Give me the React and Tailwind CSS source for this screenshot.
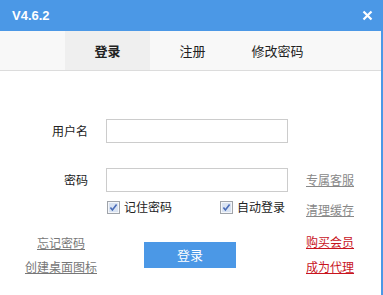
import React from "react";

const font = { fontFamily: '"Microsoft YaHei", "Noto Sans CJK SC", "Noto Sans", sans-serif' };

const Check = () => (
  <svg width="13" height="13" viewBox="0 0 13 13" className="shrink-0">
    <rect x="0.5" y="0.5" width="12" height="12" fill="#f4f6fa" stroke="#a0a4aa" />
    <rect x="2" y="2" width="9" height="9" fill="#d9e3f2" />
    <path d="M3.4 6.4 L5.4 9 L9.6 3.4" fill="none" stroke="#4a6cb8" strokeWidth="1.6" />
  </svg>
);

const Tab = ({ children, active = false }) => (
  <div
    className={`w-[85px] h-full flex items-center justify-center text-[13px] text-[#222] ${
      active ? "bg-[#efefef] font-bold" : ""
    }`}
  >
    {children}
  </div>
);

export default function App() {
  return (
    <div className="w-[383px] h-[295px] bg-white overflow-hidden flex flex-col" style={font}>
      {/* title bar */}
      <div className="h-[31px] bg-[#4b98e6] flex items-center justify-between pl-[12px] pr-[10px] shrink-0">
        <span className="text-white font-bold text-[13px]" style={{ fontFamily: '"Liberation Sans", Arial, sans-serif' }}>
          V4.6.2
        </span>
        <svg width="11" height="11" viewBox="0 0 11 11">
          <path d="M1.5 1.5 L9.5 9.5 M9.5 1.5 L1.5 9.5" stroke="#fff" strokeWidth="2.2" />
        </svg>
      </div>

      <div className="flex-1 flex flex-col border-r-2 border-[#4b98e6]">
        {/* tabs */}
        <div className="h-[40px] bg-[#f8f8f8] border-b border-[#dcdcdc] flex pl-[65px] shrink-0">
          <Tab active>登录</Tab>
          <Tab>注册</Tab>
          <Tab>修改密码</Tab>
        </div>

        {/* username */}
        <div className="flex items-center h-[24px] mt-[48px]">
          <span className="w-[88px] text-right text-[12px] text-[#222]">用户名</span>
          <div className="ml-[18px] w-[182px] h-[24px] border border-[#cccccc] bg-white" />
        </div>

        {/* password */}
        <div className="flex items-center h-[24px] mt-[25px]">
          <span className="w-[88px] text-right text-[12px] text-[#222]">密码</span>
          <div className="ml-[18px] w-[182px] h-[24px] border border-[#cccccc] bg-white" />
          <a className="ml-[18px] text-[12px] text-[#888] underline">专属客服</a>
        </div>

        {/* checkboxes */}
        <div className="flex items-center h-[16px] mt-[7px]">
          <div className="ml-[107px] flex items-center gap-[4px] w-[113px]">
            <Check />
            <span className="text-[12px] text-[#222]">记住密码</span>
          </div>
          <div className="flex items-center gap-[4px] w-[86px]">
            <Check />
            <span className="text-[12px] text-[#222]">自动登录</span>
          </div>
          <a className="mt-[6px] text-[12px] text-[#888] underline">清理缓存</a>
        </div>

        {/* bottom */}
        <div className="flex items-center mt-[18px]">
          <div className="w-[122px] flex flex-col items-center gap-[6px]">
            <a className="text-[12px] text-[#777] underline leading-[18px]">忘记密码</a>
            <a className="text-[12px] text-[#777] underline leading-[18px]">创建桌面图标</a>
          </div>
          <button className="ml-[22px] w-[92px] h-[26px] bg-[#4b98e6] text-white text-[13px]">登录</button>
          <div className="ml-[70px] flex flex-col gap-[7px]">
            <a className="text-[12px] text-[#c8141e] underline leading-[18px]">购买会员</a>
            <a className="text-[12px] text-[#c8141e] underline leading-[18px]">成为代理</a>
          </div>
        </div>
      </div>
    </div>
  );
}
